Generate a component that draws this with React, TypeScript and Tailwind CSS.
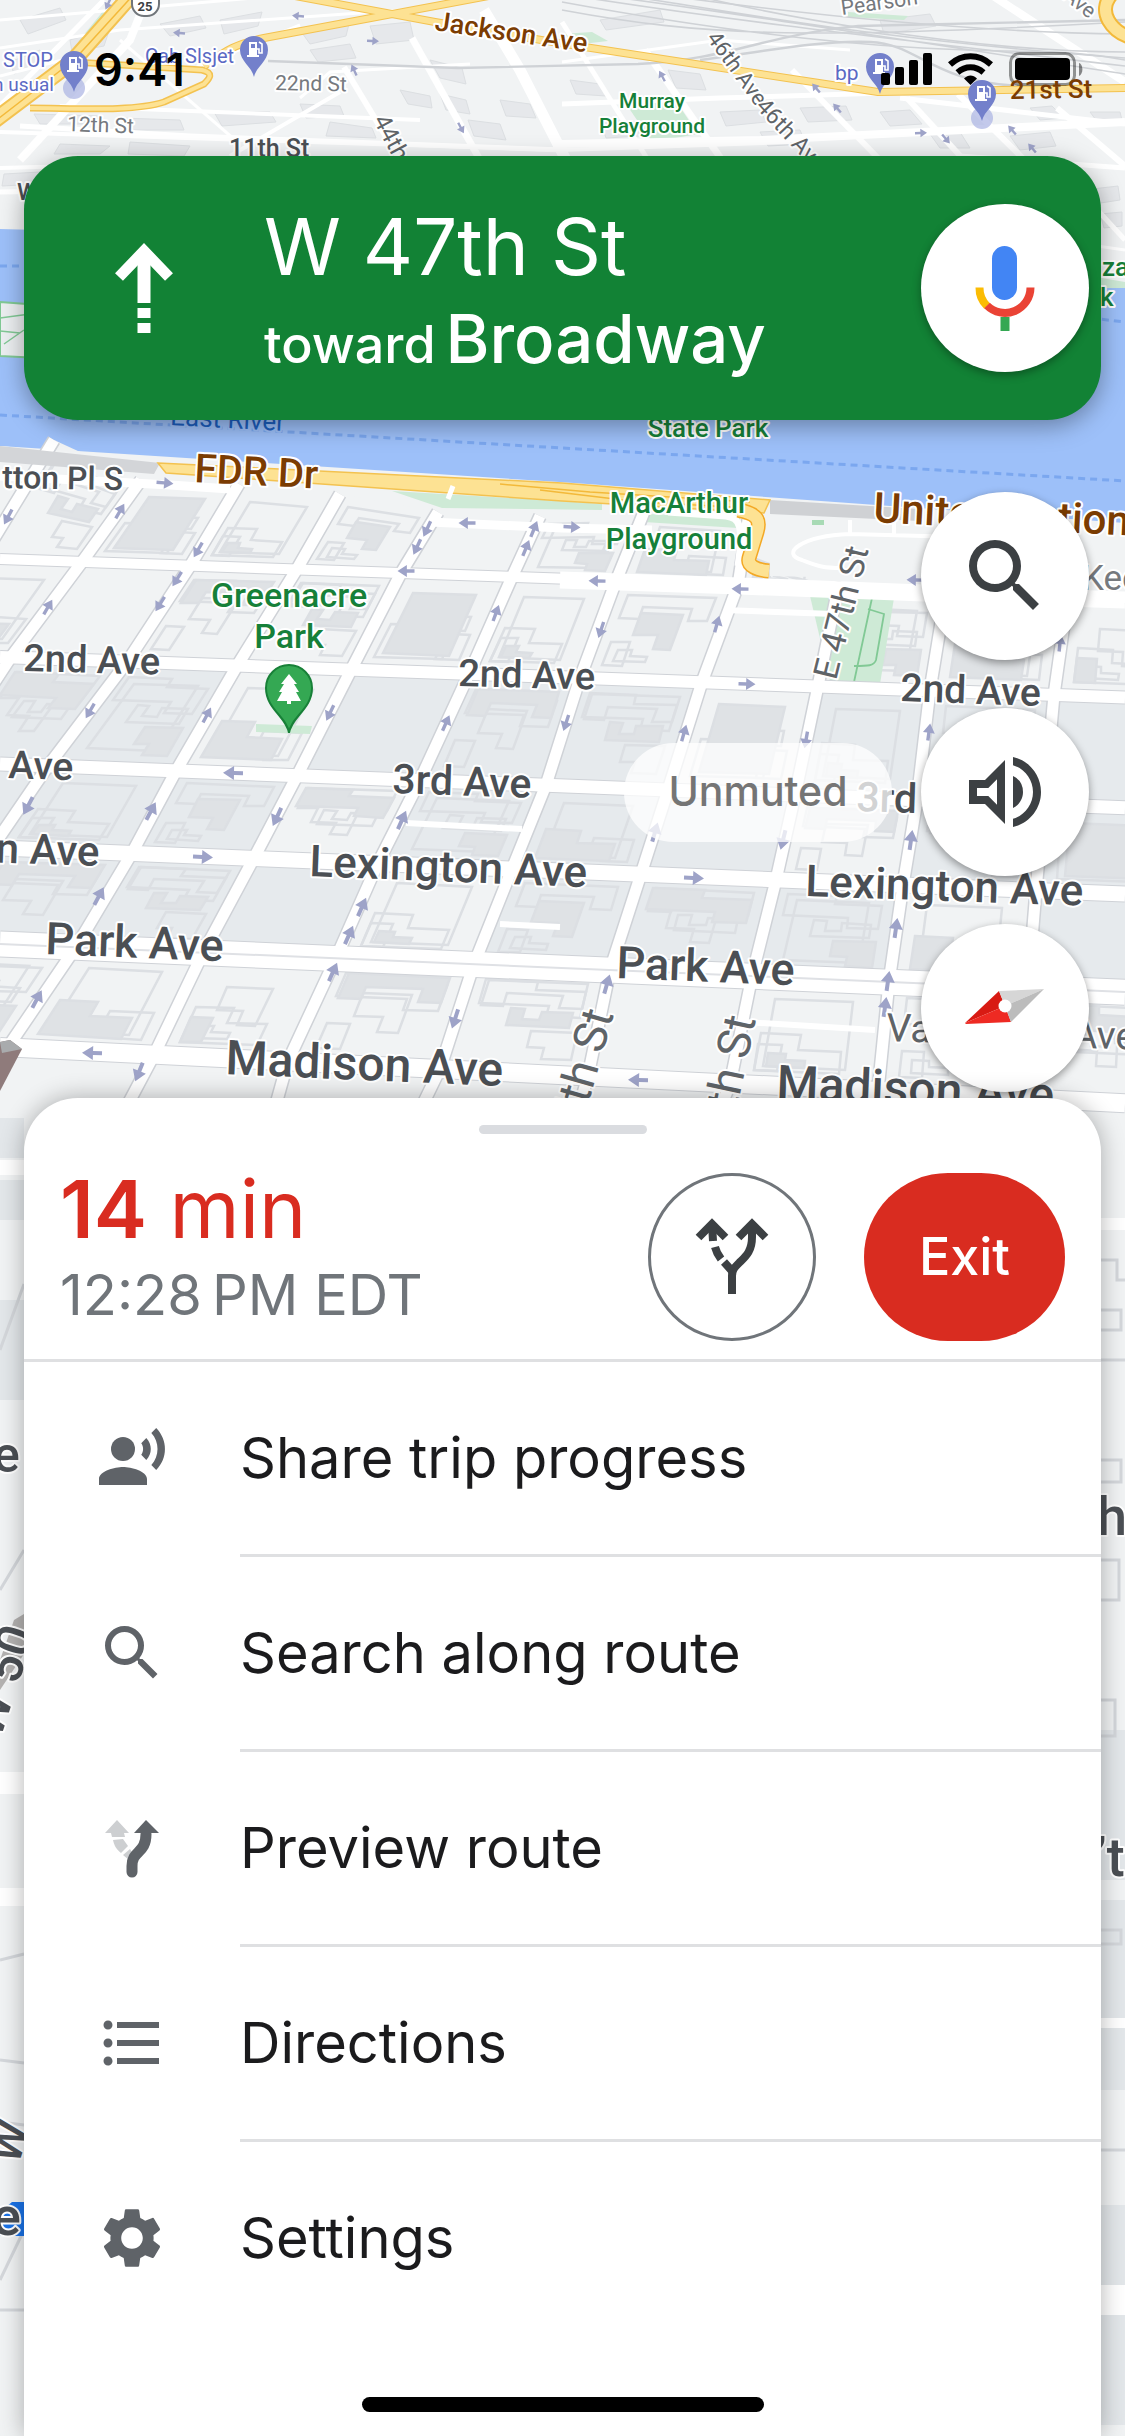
import React from "react";
import { MdFormatListBulleted, MdOutlineVolumeUp, MdRecordVoiceOver, MdSearch, MdSettings } from "react-icons/md";

type Point = [number, number];

const line = (pts: Point[]) => pts.map((p) => p.join(",")).join(" ");

// y of each avenue at the left edge, its slope and its width
const avenues = [
  { y: 559, slope: 0.035, width: 10 },
  { y: 657, slope: 0.036, width: 12 },
  { y: 764, slope: 0.039, width: 13 },
  { y: 848, slope: 0.041, width: 15 },
  { y: 944, slope: 0.043, width: 25 },
  { y: 1047, slope: 0.05, width: 18 },
];

// x of each cross street where it starts, meets the six avenues and leaves
const streets: { top: number; xs: number[] }[] = [
  { top: 440, xs: [54, -18, -80, -140, -190, -240, -300, -330] },
  { top: 480, xs: [141, 82, 11, -58, -110, -160, -215, -240] },
  { top: 484, xs: [239, 190, 127, 48, -8, -66, -120, -150] },
  { top: 494, xs: [340, 297, 237, 176, 132, 76, 8, -20] },
  { top: 512, xs: [438, 401, 351, 297, 254, 203, 154, 128] },
  { top: 516, xs: [540, 512, 469, 420, 378, 336, 288, 276] },
  { top: 512, xs: [644, 616, 580, 546, 512, 474, 440, 423] },
  { top: 520, xs: [748, 738, 702, 668, 641, 610, 588, 580] },
  { top: 594, xs: [840, 838, 818, 795, 776, 752, 730, 722] },
  { top: 600, xs: [948, 946, 930, 917, 903, 889, 878, 874] },
  { top: 560, xs: [1072, 1068, 1054, 1044, 1036, 1028, 1020, 1016] },
  { top: 560, xs: [1190, 1188, 1184, 1180, 1176, 1172, 1168, 1166] },
];

const streetPoints = (s: { top: number; xs: number[] }): Point[] =>
  s.xs.map((x, i) => {
    if (i === 0) return [x, s.top];
    if (i === 7) return [x, 1104];
    const a = avenues[i - 1];
    return [x, Math.round(a.y + a.slope * x)];
  });

const footprints = [
  [[0.12, 0.14], [0.5, 0.14], [0.5, 0.22], [0.86, 0.22], [0.86, 0.46], [0.62, 0.46], [0.62, 0.36], [0.12, 0.36]],
  [[0.14, 0.52], [0.42, 0.52], [0.42, 0.66], [0.72, 0.66], [0.72, 0.86], [0.14, 0.86]],
  [[0.14, 0.14], [0.86, 0.14], [0.86, 0.38], [0.7, 0.38], [0.7, 0.26], [0.3, 0.26], [0.3, 0.38], [0.14, 0.38]],
  [[0.2, 0.2], [0.76, 0.2], [0.76, 0.82], [0.2, 0.82]],
  [[0.3, 0.32], [0.64, 0.32], [0.64, 0.68], [0.5, 0.68], [0.5, 0.54], [0.3, 0.54]],
  [[0.54, 0.6], [0.86, 0.6], [0.86, 0.86], [0.66, 0.86], [0.66, 0.76], [0.54, 0.76]],
  [[0.14, 0.62], [0.3, 0.62], [0.3, 0.86], [0.14, 0.86]],
  [[0.36, 0.4], [0.46, 0.4], [0.46, 0.5], [0.58, 0.5], [0.58, 0.42], [0.8, 0.42], [0.8, 0.56], [0.36, 0.56]],
  [[0.22, 0.7], [0.34, 0.7], [0.34, 0.76], [0.48, 0.76], [0.48, 0.82], [0.22, 0.82]],
];

const blocks = streets.slice(0, -1).flatMap((s, col) => {
  const left = streetPoints(s);
  const right = streetPoints(streets[col + 1]);
  return [0, 1, 2, 3, 4, 5].map((row) => {
    const at = ([u, v]: number[]): Point => {
      const [a, b, c, d] = [left[row], right[row], left[row + 1], right[row + 1]];
      const x = (a[0] * (1 - u) + b[0] * u) * (1 - v) + (c[0] * (1 - u) + d[0] * u) * v;
      const y = (a[1] * (1 - u) + b[1] * u) * (1 - v) + (c[1] * (1 - u) + d[1] * u) * v;
      return [Math.round(x), Math.round(y)];
    };
    const seed = col * 5 + row * 3;
    return {
      key: `${col}-${row}`,
      commercial: row >= 2 && row <= 4 && seed % 4 !== 1,
      outline: line([[0, 0], [1, 0], [1, 1], [0, 1]].map(at)),
      shapes: [0, 2, 5, 7].map((step) => line(footprints[(seed + step) % 9].map(at))),
      bare: seed % 6 === 2,
    };
  });
});

const upperStreets: [string, number][] = [
  ["0,20 300,-6", 3], ["0,48 120,30 430,8", 3], ["0,76 70,58", 3], ["0,132 562,150 790,142", 4],
  ["60,106 420,120", 4], ["20,126 190,136 562,150", 5], ["0,168 300,160 562,168", 4], ["0,192 600,182", 5],
  ["120,40 235,140", 3], ["300,98 330,72 470,64", 3], ["190,70 300,25", 3], ["230,156 340,92", 4],
  ["344,67 400,160", 6], ["412,38 480,160", 7], ["484,10 520,70 566,160", 11], ["562,22 648,160", 5],
  ["645,50 722,160", 7], ["792,70 880,160", 6], ["907,98 964,160", 6], ["958,94 1085,220", 6],
  ["984,-10 1125,82", 8], ["1057,108 1125,166", 6], ["562,104 720,98 885,93", 5], ["562,144 760,140 1125,122", 8],
  ["900,98 1125,124", 5], ["960,156 1125,168", 5], ["1070,180 1125,240", 5], ["1090,245 1125,250", 3],
  ["562,62 720,40 850,50", 3], ["20,160 130,40 146,0", 8], ["-10,116 104,0", 5],
];

const upperBuildings = [
  "20,20 60,8 66,20 28,34", "70,40 110,28 104,46 72,52", "10,62 40,50 46,58 14,74", "160,24 200,16 206,28 170,36",
  "220,20 262,12 258,26 224,34", "300,30 350,20 346,36 310,44", "370,26 410,22 414,40 376,44", "310,50 350,44 356,58 318,62",
  "34,114 100,116 96,124 40,124", "120,118 180,120 184,130 128,130", "214,112 270,112 276,122 222,126", "300,104 340,106 344,116 306,118",
  "330,122 372,128 376,138 326,136", "60,144 110,146 100,154 54,154", "130,142 190,146 184,156 128,154", "400,90 430,96 432,108 408,104",
  "430,60 462,68 466,84 440,78", "440,94 466,100 470,114 446,110", "468,120 500,124 506,140 474,136", "500,100 530,104 536,118 506,116",
  "570,80 600,84 606,96 576,94", "600,120 636,122 640,136 606,138", "668,70 700,74 706,90 676,88", "720,112 760,110 766,122 726,126",
  "760,132 800,130 806,144 768,146", "800,108 846,106 852,120 808,122", "880,112 910,110 922,124 890,126", "930,134 960,132 970,148 940,148",
  "1010,136 1050,132 1056,146 1020,150", "1030,108 1052,106 1064,118 1040,120", "1090,112 1120,112 1122,120 1096,120", "1084,190 1118,186 1120,200 1094,204",
  "4,174 40,172 38,184 2,186", "1100,214 1122,212 1122,226 1104,228", "880,20 930,14 936,26 884,34", "600,20 660,10 664,22 606,30",
];

const arrows: [number, number, number][] = [
  [8, 517, 118], [120, 511, -60], [165, 483, 5], [198, 550, 120], [177, 579, 122], [160, 604, 122], [48, 607, -60],
  [467, 523, 180], [406, 571, 180], [427, 529, 115], [417, 547, 115], [534, 529, -68], [526, 548, -68], [496, 613, -70],
  [90, 711, 120], [207, 715, -62], [330, 713, 116], [446, 723, -66], [28, 806, 118], [233, 773, 181], [151, 811, -62],
  [277, 817, 115], [402, 820, -66], [203, 857, 3], [99, 896, -62], [362, 907, -66], [349, 935, -66], [333, 972, -66],
  [37, 999, -62], [92, 1053, 182], [139, 1072, 112], [455, 1019, 108], [572, 527, 3], [597, 581, 181], [740, 589, 181],
  [601, 630, 108], [717, 624, -74], [747, 684, 2], [566, 723, 108], [684, 733, -74], [806, 740, 100], [929, 732, -82],
  [915, 580, 181], [694, 878, 3], [655, 832, -74], [783, 840, 104], [911, 840, -82], [896, 928, -82], [888, 981, -82],
  [885, 1007, -82], [607, 984, -74], [638, 1080, 182], [1060, 643, -84], [298, 16, 185], [179, 33, 185], [373, 41, 3],
  [354, 70, -115], [461, 128, 62], [662, 76, -118], [816, 88, -130], [837, 108, -130], [921, 133, -2], [946, 139, 50],
  [1012, 130, -130], [1032, 148, -130], [108, 4, 115],
];

const labels: { text: string; x: number; y: number; size: number; tone: string; rotate?: number; anchor?: "start" | "middle" | "end" }[] = [
  { text: "tton Pl S", x: 2, y: 488, size: 32, tone: "street", rotate: 1 },
  { text: "2nd Ave", x: 23, y: 671, size: 38, tone: "street", rotate: 1.5 },
  { text: "2nd Ave", x: 458, y: 686, size: 38, tone: "street", rotate: 1.5 },
  { text: "2nd Ave", x: 900, y: 701, size: 39, tone: "street", rotate: 2 },
  { text: "Ave", x: 8, y: 778, size: 39, tone: "street", rotate: 2 },
  { text: "3rd Ave", x: 392, y: 793, size: 41, tone: "street", rotate: 2 },
  { text: "3rd Ave", x: 856, y: 811, size: 41, tone: "street", rotate: 2 },
  { text: "n Ave", x: 99, y: 866, size: 42, tone: "street", rotate: 2, anchor: "end" },
  { text: "Lexington Ave", x: 309, y: 876, size: 44, tone: "street", rotate: 2.3 },
  { text: "Lexington Ave", x: 805, y: 896, size: 44, tone: "street", rotate: 2 },
  { text: "Park Ave", x: 45, y: 954, size: 45, tone: "street", rotate: 2.3 },
  { text: "Park Ave", x: 616, y: 978, size: 45, tone: "street", rotate: 2.3 },
  { text: "Madison Ave", x: 225, y: 1074, size: 48, tone: "street", rotate: 2.5 },
  { text: "Madison Ave", x: 776, y: 1099, size: 48, tone: "street", rotate: 2.5 },
  { text: "11th St", x: 229, y: 157, size: 25, tone: "street" },
  { text: "W", x: 17, y: 200, size: 24, tone: "street" },
  { text: "Vanderbilt Ave", x: 886, y: 1041, size: 39, tone: "minor", rotate: 2 },
  { text: "45th St", x: 614, y: 1014, size: 46, tone: "minor", rotate: -74, anchor: "end" },
  { text: "46th St", x: 756, y: 1019, size: 46, tone: "minor", rotate: -78, anchor: "end" },
  { text: "E 47th St", x: 836, y: 681, size: 34, tone: "minor", rotate: -76 },
  { text: "Kee", x: 1082, y: 590, size: 35, tone: "faint" },
  { text: "22nd St", x: 275, y: 90, size: 21, tone: "faint", rotate: 1 },
  { text: "12th St", x: 67, y: 131, size: 21, tone: "faint", rotate: 2 },
  { text: "44th St", x: 373, y: 120, size: 24, tone: "minor", rotate: 62 },
  { text: "46th Ave", x: 706, y: 38, size: 22, tone: "minor", rotate: 54 },
  { text: "46th Ave", x: 755, y: 107, size: 23, tone: "minor", rotate: 47 },
  { text: "Pearson", x: 842, y: 15, size: 21, tone: "faint", rotate: -8 },
  { text: "Ave", x: 1062, y: -2, size: 21, tone: "faint", rotate: 38 },
  { text: "Jackson Ave", x: 434, y: 30, size: 27, tone: "highway", rotate: 8.4 },
  { text: "FDR Dr", x: 194, y: 482, size: 40, tone: "highway", rotate: 3 },
  { text: "United Nations", x: 873, y: 522, size: 42, tone: "highway", rotate: 3 },
  { text: "East River", x: 170, y: 425, size: 26, tone: "water", rotate: 3 },
  { text: "Murray", x: 652, y: 108, size: 21, tone: "park", anchor: "middle" },
  { text: "Playground", x: 652, y: 133, size: 21, tone: "park", anchor: "middle" },
  { text: "State Park", x: 708, y: 437, size: 26, tone: "park", anchor: "middle" },
  { text: "MacArthur", x: 679, y: 513, size: 29, tone: "park", anchor: "middle" },
  { text: "Playground", x: 679, y: 549, size: 29, tone: "park", anchor: "middle" },
  { text: "Greenacre", x: 289, y: 607, size: 34, tone: "park", anchor: "middle" },
  { text: "Park", x: 289, y: 648, size: 34, tone: "park", anchor: "middle" },
  { text: "za", x: 1102, y: 276, size: 26, tone: "park" },
  { text: "k", x: 1100, y: 306, size: 26, tone: "park" },
  { text: "STOP", x: 53, y: 67, size: 20, tone: "fuel", anchor: "end" },
  { text: "n usual", x: 54, y: 91, size: 19, tone: "fuel", anchor: "end" },
  { text: "Cab Slsjet", x: 145, y: 63, size: 20, tone: "fuel" },
  { text: "bp", x: 835, y: 80, size: 21, tone: "fuel" },
  { text: "e", x: -7, y: 1472, size: 50, tone: "street" },
  { text: "e", x: -8, y: 2235, size: 54, tone: "street" },
  { text: "W 50", x: 0, y: 1740, size: 50, tone: "street", rotate: -72 },
  { text: "W", x: 18, y: 2166, size: 46, tone: "street", rotate: -72 },
  { text: "h", x: 1097, y: 1535, size: 54, tone: "street" },
  { text: "’t", x: 1095, y: 1876, size: 54, tone: "street" },
];

const tones: Record<string, string> = {
  street: "fill-[#4b4f54] stroke-white font-medium",
  minor: "fill-[#5f6468] stroke-white",
  faint: "fill-[#75797e] stroke-white",
  highway: "fill-[#7b3c02] stroke-white font-medium",
  park: "fill-[#168039] stroke-white font-medium",
  water: "fill-[#1c5fc0] stroke-[#9dc0f9]",
  fuel: "fill-[#5b69c4] stroke-white",
};

const FuelPin = ({ x, y }: { x: number; y: number }) => (
  <g transform={`translate(${x} ${y})`}>
    <path d="M0 27C-2 17-14 11-14 0a14 14 0 0 1 28 0c0 11-12 17-14 27z" fill="#7380cb" />
    <path d="M-5-8h8v13h-8z M-7 5H5v2H-7z" fill="#fff" />
    <path d="M3-1h2v4h3v-9l-3-2" fill="none" stroke="#fff" strokeWidth="1.6" />
    <path d="M-3-6h4v4h-4z" fill="#7380cb" />
  </g>
);

const MapView = () => (
  <svg
    className="absolute inset-0 h-full w-full font-[Roboto,sans-serif]"
    viewBox="0 0 1125 2436"
    preserveAspectRatio="xMidYMin slice"
    role="img"
    aria-label="Map"
  >
    <rect width="1125" height="2436" fill="#f1f3f4" />

    {/* Queens side */}
    <g fill="#e6e8eb" stroke="#dcdfe2" strokeWidth="1">
      {upperBuildings.map((points) => (
        <polygon key={points} points={points} />
      ))}
    </g>
    <g fill="#ceead6">
      <path d="M622 98h52l24 36-46 8z" />
      <path d="M104 10l12-4-14 24-24 12z" />
      <path d="M562 34l30-2 16 9-26 3z" />
      <path d="M848 12l60 4-4 4-56-3z" />
    </g>
    <g fill="none" stroke="#fff">
      {upperStreets.map(([points, width]) => (
        <polyline key={points} points={points} strokeWidth={width} />
      ))}
    </g>
    <g fill="none" stroke="#cfd2d6" strokeWidth="1.6">
      <path d="M562-6C700 16 830 32 1125 66M576-8C700 8 840 30 1125 74M600-8C740 12 860 38 1125 58M640-8c100 14 300 40 485 42" />
      <path d="M562 2c120 22 250 40 360 46s140 0 203 12M562 10c140 26 240 30 563 12M680-8c80 20 280 60 445 60" />
      <path d="M268 61l190 7 180-4c90-4 130-30 220-38l267-6M700 60c60-8 120-20 170-18s60 40 150 44" strokeWidth="2.4" />
    </g>
    <g fill="none" strokeLinejoin="round">
      <g stroke="#f3c250">
        <path d="M134-8L72 62-8 122" strokeWidth="17" />
        <path d="M74 62l128 8c12 3 8 8 2 14l-40 18c-30 10-90 6-134 6" strokeWidth="7" />
        <path d="M204 66c20-14 30-22 60-28L510-8" strokeWidth="8" />
        <path d="M295-4l140 26 130 22 313 48 247-4" strokeWidth="8" />
      </g>
      <g stroke="#fde293">
        <path d="M134-8L72 62-8 122" strokeWidth="13" />
        <path d="M74 62l128 8c12 3 8 8 2 14l-40 18c-30 10-90 6-134 6" strokeWidth="4" />
        <path d="M204 66c20-14 30-22 60-28L510-8" strokeWidth="6" />
        <path d="M295-4l140 26 130 22 313 48 247-4" strokeWidth="6" />
      </g>
      <path d="M136-8L74 60-6 122" stroke="#f3b93a" strokeWidth="1.5" />
      <path d="M1112-6c-16 18 0 38 20 44" stroke="#f3b93a" strokeWidth="15" />
      <path d="M1112-6c-16 18 0 38 20 44" stroke="#fde293" strokeWidth="11" />
    </g>

    {/* East River */}
    <path d="M0 229l300 8 825 50v236L560 482 0 446z" fill="#9dc0f9" />
    <path d="M0 302l40 3v53l-40-2z" fill="#eceff1" stroke="#81c995" strokeWidth="2" />
    <path d="M0 318l30-4M0 331l20 2M4 344l20-14" stroke="#81c995" strokeWidth="1.5" />
    <path d="M1090 276l35 6v6h-35z" fill="#ceead6" />
    <path d="M0 266h40M0 415l562 33 563 33M1090 318l35 4" fill="none" stroke="#7ba7ef" strokeWidth="3" strokeDasharray="7 5" />

    {/* Manhattan blocks */}
    <path d="M0 446l160 16 400 22 565 40v600H0z" fill="#f1f3f4" />
    {blocks.map((block) => (
      <g key={block.key}>
        <polygon points={block.outline} fill={block.commercial ? "#e6eaed" : "#f1f3f4"} />
        {!block.bare &&
          block.shapes.map((points, i) => (
            <polygon key={i} points={points} fill={i === 3 ? "#dfe2e5" : "none"} stroke="#dcdfe3" strokeWidth="2.5" />
          ))}
      </g>
    ))}
    <path d="M770 514l355 14v56l-355-8z" fill="#f1f3f4" />
    <g fill="#ceead6">
      <path d="M392 491l170 10 40 3v6l-160-2z" />
      <path d="M648 514l92 4-2 10-94-6z" />
      <path d="M810 596l84 2-14 86-50-3z" />
      <path d="M256 724l56 2-2 8-54-2z" />
      <path d="M812 520h12v5h-12z" fill="#a8dab5" />
    </g>
    <path d="M872 598l-18 84M868 609l16 5-8 46c-2 6-8 6-22 6" fill="none" stroke="#81c995" strokeWidth="1.8" />

    <g fill="none" stroke="#cfd2d7" strokeLinejoin="round">
      {avenues.map((a) => (
        <path key={a.y} d={`M0 ${a.y}L1125 ${a.y + a.slope * 1125}`} strokeWidth={a.width + 2} />
      ))}
      {streets.map((s) => (
        <polyline key={s.xs[0]} points={line(streetPoints(s))} strokeWidth="14" />
      ))}
    </g>
    <g fill="none" stroke="#fff" strokeLinejoin="round">
      {avenues.map((a) => (
        <path key={a.y} d={`M0 ${a.y}L1125 ${a.y + a.slope * 1125}`} strokeWidth={a.width} />
      ))}
      {streets.map((s) => (
        <polyline key={s.xs[0]} points={line(streetPoints(s))} strokeWidth="11" />
      ))}
      <path d="M0 476l170 9 60 4M430 522l132 6 90 2" strokeWidth="9" />
      <path d="M960 537l-110-3c-50 2-70 20-48 26 16 6 20 8 40 8M850 520v14M894 522v12" strokeWidth="4" />
      <path d="M560 580l180 6 260 10 125 4" strokeWidth="17" />
      <path d="M406 823l116 6M745 1022l130 8M500 924l60 3M724 610l110 4" strokeWidth="6" />
      <path d="M668 512l58 4c14 2 18 10 12 50" strokeWidth="7" />
    </g>
    <path d="M0 944l1125 48" stroke="#dfe1e5" strokeWidth="2" />

    {/* FDR Drive */}
    <path d="M0 446l160 17-6 11L0 462z" fill="#d3d5d8" />
    <path d="M770 500l150 9v12l-150-7z" fill="#cfd1d4" />
    <path d="M158 463l404 20 208 17-6 13-202-12-396-28z" fill="#fde293" stroke="#f3c250" strokeWidth="1.5" />
    <path d="M500 484l90 8 160 10M540 490l100 12 110 6" fill="none" stroke="#f3b93a" strokeWidth="1.5" />
    <path d="M738 510c22 4 22 12 19 22l-8 26c-2 8 8 12 20 13" fill="none" stroke="#f3a825" strokeWidth="15" />
    <path d="M738 510c22 4 22 12 19 22l-8 26c-2 8 8 12 20 13" fill="none" stroke="#fde293" strokeWidth="12" />
    <path d="M448 499l5-13" stroke="#fff" strokeWidth="5" />

    {/* strips that stay visible on both sides of the sheet */}
    <g>
      <path d="M0 1118h24v40H0z M0 1180h24v40H0z M0 1300h24v100H0z M1101 1730h24v150h-24z M1101 1900h24v190h-24z M1101 2205h24v220h-24z" fill="#e3e7ea" />
      <path d="M0 1160h24v15H0z M0 1772h24v22H0z M0 1888h24v18H0z M1101 1218h24v12h-24z M1101 2018h24v10h-24z M1101 2285h24v30h-24z" fill="#fff" />
      <path d="M0 1350l24-66M0 1590l24-40M0 1960l24-6M0 2060l24 3M0 2122l24 3M0 2280l24-50M0 2310h24M1101 1360h24M1101 1260h16v20h8M1101 1310h20v20h-20M1101 1460h20v22h-20M1101 1560h18v40h-18M1101 1700h14v36h-14M1101 1930h20v14h-20M1101 2150h24" fill="none" stroke="#d4d7db" strokeWidth="3" />
      <path d="M0 1042l10-2 12 9-22 42z" fill="#8f7b7b" />
      <path d="M0 1042l10-2 12 9-20 4z" fill="#a9abad" />
      <path d="M14 1620l10-6v40L0 1690v-30z" fill="#b4b2b1" />
      <path d="M12 2202h12v34H0v-24z" fill="#1a73e8" />
    </g>

    <g fill="#9ea3c8">
      {arrows.map(([x, y, angle]) => (
        <path key={`${x}-${y}`} d="M-10-2h9v-5l11 7-11 7v-5h-9z" transform={`translate(${x} ${y}) rotate(${angle}) scale(${y < 160 ? 0.6 : y < 760 ? 0.85 : 1})`} />
      ))}
    </g>

    <circle cx="74" cy="88" r="11" fill="#a9b2e2" opacity="0.7" />
    <FuelPin x={74} y={65} />
    <FuelPin x={254} y={50} />
    <FuelPin x={880} y={67} />
    <path d="M289 733c-2-16-23-24-23-45a23 23 0 0 1 46 0c0 21-21 29-23 45z" fill="#34a853" stroke="#188038" strokeWidth="2" />
    <path d="M289 674l8 10h-3l5 8h-3l5 9h-10v3h-4v-3h-10l5-9h-3l5-8h-3z" fill="#fff" />
    <rect x="132" y="-12" width="27" height="28" rx="12" fill="#fff" stroke="#70757a" strokeWidth="2" />
    <text x="145" y="11" textAnchor="middle" className="fill-[#3c4043] text-[13px] font-bold">25</text>

    {labels.map((l, i) => (
      <text
        key={i}
        className={tones[l.tone]}
        fontSize={l.size}
        textAnchor={l.anchor}
        strokeWidth="4"
        strokeLinejoin="round"
        paintOrder="stroke"
        transform={`translate(${l.x} ${l.y}) rotate(${l.rotate ?? 0})`}
      >
        {l.text}
      </text>
    ))}
  </svg>
);

// one pin and one label are stacked above the status bar
const MapOverlay = () => (
  <svg className="pointer-events-none absolute inset-0 h-full w-full font-[Roboto,sans-serif]" viewBox="0 0 1125 2436" preserveAspectRatio="xMidYMin slice" aria-hidden="true">
    <circle cx="982" cy="118" r="11" fill="#a9b2e2" opacity="0.7" />
    <FuelPin x={982} y={94} />
    <text x="1010" y="99" fontSize="26" className="fill-[#7b3c02] font-medium" transform="rotate(-1 1010 99)">21st St</text>
  </svg>
);

const StatusBar = () => (
  <div className="flex h-[138px] items-center justify-between pl-[94px] pr-[42px]">
    <span className="text-[45px] font-semibold leading-none text-black">9:41</span>
    <div className="flex items-center gap-4">
      <svg className="h-8 w-[51px]" viewBox="0 0 51 32" aria-label="Signal">
        <rect y="20" width="9" height="12" rx="2" />
        <rect x="14" y="14" width="9" height="18" rx="2" />
        <rect x="28" y="7" width="9" height="25" rx="2" />
        <rect x="42" width="9" height="32" rx="2" />
      </svg>
      <svg className="h-8 w-[45px]" viewBox="0 0 45 32" fill="none" stroke="#000" strokeWidth="6" aria-label="Wi-Fi">
        <path d="M2 11.500C14 .5 31 .5 43 11.500" />
        <path d="M9.500 19.500c8-7 18-7 26 0" />
        <path d="M16 25.500c4-4 9-4 13 0L22.500 32z" fill="#000" stroke="none" />
      </svg>
      <svg className="h-[34px] w-[74px]" viewBox="0 0 74 34" aria-label="Battery">
        <rect x="1.500" y="1.500" width="64" height="31" rx="9" fill="none" stroke="#000" strokeOpacity="0.4" strokeWidth="3" />
        <rect x="6" y="6" width="55" height="22" rx="4" />
        <path d="M70 11c4 1 5 11 0 13z" fillOpacity="0.45" />
      </svg>
    </div>
  </div>
);

const DirectionBanner = () => (
  <header className="mx-6 mt-[18px] flex h-[264px] items-center rounded-[54px] bg-[#128235] pl-[90px] pr-3 text-white shadow-[0_6px_24px_rgba(0,0,0,0.35)]">
    <svg className="h-[90px] w-[60px] shrink-0" viewBox="0 0 60 90" aria-label="Straight">
      <path d="M5 34L30 8l25 26" fill="none" stroke="#fff" strokeWidth="11" strokeLinejoin="miter" strokeLinecap="butt" />
      <path d="M23.500 8h13v52h-13zM23.500 65h13v10h-13zM23.500 80h13v10h-13z" fill="#fff" />
    </svg>
    <div className="ml-[90px] flex-1 whitespace-nowrap pt-3">
      <h1 className="text-[78px] leading-[96px]">W 47th St</h1>
      <p className="text-[52px] font-medium leading-[88px]">
        toward <span className="-ml-1 text-[67px]">Broadway</span>
      </p>
    </div>
    <button aria-label="Voice search" className="flex size-42 items-center justify-center rounded-full bg-white shadow-[0_3px_9px_rgba(0,0,0,0.35)]">
      <svg className="size-24" viewBox="0 0 96 96" fill="none">
        <rect x="35" y="6" width="25" height="54" rx="12.500" fill="#4285f4" />
        <path d="M22.500 47.500A25.500 25.500 0 0 0 30 66" stroke="#fbbc04" strokeWidth="8" />
        <path d="M30 65.500A25.500 25.500 0 0 0 73.500 47.500" stroke="#ea4335" strokeWidth="8" />
        <path d="M43.500 77h9v14h-9z" fill="#34a853" />
      </svg>
    </button>
  </header>
);

const fab = "flex size-42 items-center justify-center rounded-full bg-white text-[#3c4043] shadow-[0_3px_9px_rgba(0,0,0,0.4)]";

const MapControls = () => (
  <div className="mr-9 mt-[72px] flex flex-col items-end gap-12">
    <button aria-label="Search" className={fab}>
      <MdSearch className="size-24" />
    </button>
    <div className="flex items-center gap-[29px]">
      <span role="status" className="flex h-[99px] w-[268px] items-center justify-center rounded-full bg-white/75 text-[41px] font-medium text-[#757575]">
        Unmuted
      </span>
      <button aria-label="Sound" className={fab}>
        <MdOutlineVolumeUp className="size-24" />
      </button>
    </div>
    <button aria-label="Compass" className={fab}>
      <svg className="size-24" viewBox="0 0 96 96">
        <path d="M8 63l34-32 6 15z" fill="#d81a13" />
        <path d="M8 63l40-17 6 16-45 2z" fill="#ee2a23" />
        <path d="M42 31l45-2-39 17z" fill="#d6d6d6" />
        <path d="M87 29L54 62l-6-16z" fill="#bcbcbc" />
        <circle cx="48" cy="46" r="6.500" fill="#fff" />
      </svg>
    </button>
  </div>
);

const PreviewRouteIcon = ({ className }: { className?: string }) => (
  <svg className={className} viewBox="0 0 72 72" fill="none">
    <g fill="#cdcfd1">
      <path d="M21 8l12 13h-5l1 4H16l-1-4H9z" />
      <path d="M17 28l10-1 5 7-7 7c-5-4-7-8-8-13z" />
      <path d="M27 43l7-6 3 5-4 6z" />
    </g>
    <path d="M36 60v-6c0-16 14-12 14-32" stroke="#5f6368" strokeWidth="11" strokeLinecap="round" />
    <path d="M50 8l13 13H38z" fill="#5f6368" />
  </svg>
);

const menu = [
  { label: "Share trip progress", icon: MdRecordVoiceOver },
  { label: "Search along route", icon: MdSearch },
  { label: "Preview route", icon: PreviewRouteIcon },
  { label: "Directions", icon: MdFormatListBulleted },
  { label: "Settings", icon: MdSettings },
];

const TripSheet = () => (
  <section className="mx-6 mt-1.5 flex flex-1 flex-col rounded-t-[54px] bg-white shadow-[0_0_24px_rgba(0,0,0,0.3)]">
    <div className="mx-auto mt-[27px] h-[9px] w-42 rounded-full bg-[#dadce0]" />
    <div className="mt-[27px] flex items-start border-b-3 border-[#dfe0e2] pb-[18px] pl-9 pr-9">
      <div className="flex-1 whitespace-nowrap">
        <h2 className="text-[80px] leading-[96px] text-[#d92c20]">
          <span className="font-semibold">14</span> min
        </h2>
        <p className="text-[56px] leading-[76px] text-[#70757a]">12:28{"\u202f"}PM EDT</p>
      </div>
      <button aria-label="Alternate routes" className="mt-3 flex size-42 items-center justify-center rounded-full border-3 border-[#70757a]">
        <svg className="size-24" viewBox="0 0 96 96" fill="none" stroke="#3c4043" strokeWidth="8">
          <path d="M14.500 28.500L28 15l13.500 13.500M54.500 28.500L68 15l13.500 13.500" />
          <path d="M68 15v13c0 15-7 20-13 26-5 5-7 7-7 13v18" />
          <path d="M28 15l1 17M31 38c1 4 3 8 6 12M40 53l8 9" />
        </svg>
      </button>
      <button className="ml-12 mt-3 h-42 w-[201px] rounded-full bg-[#d92c20] text-[52px] font-medium text-white">Exit</button>
    </div>
    <nav>
      {menu.map(({ label, icon: Icon }, i) => (
        <button key={label} className="flex w-full items-start pl-[72px] text-left">
          <span className="mr-[72px] flex h-48 shrink-0 items-center">
            <Icon className="size-18 text-[#5f6368]" />
          </span>
          <span className={`box-content flex h-48 flex-1 items-center text-[56px] text-[#1b1b1d] ${i < menu.length - 1 ? "border-b-3 border-[#dfe0e2]" : ""}`}>
            {label}
          </span>
        </button>
      ))}
    </nav>
    <div className="mx-auto mb-6 mt-auto h-[15px] w-[402px] rounded-full bg-black" />
  </section>
);

export default function App() {
  return (
    <main className="relative min-h-screen overflow-hidden font-[Inter,sans-serif]">
      <MapView />
      <div className="relative flex min-h-screen flex-col">
        <StatusBar />
        <DirectionBanner />
        <MapControls />
        <TripSheet />
      </div>
      <MapOverlay />
    </main>
  );
}
